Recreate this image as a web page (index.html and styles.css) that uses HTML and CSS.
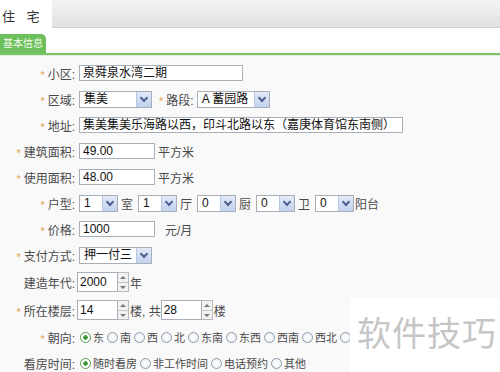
FILE: index.html
```html
<!DOCTYPE html>
<html lang="zh-CN">

<head>
    <meta charset="UTF-8">
    <title>住宅 - 基本信息</title>
    <link rel="stylesheet" href="styles.css">
</head>

<body>
    <div class="topbar">
        <div class="tab-home">住 宅</div>
        <div class="tab-rest"></div>
    </div>
    <div class="section-head">
        <span class="section-tab">基本信息</span>
    </div>

    <div class="form">
        <div class="row">
            <label class="lbl"><i class="req">*</i>小区:</label>
            <span class="txt w-name">泉舜泉水湾二期</span>
        </div>
        <div class="row">
            <label class="lbl"><i class="req">*</i>区域:</label>
            <span class="sel w-sel"><b>集美</b><i class="arrow"></i></span>
            <label class="lbl-inline"><i class="req">*</i>路段:</label>
            <span class="sel w-sel"><b>A 蓄园路</b><i class="arrow"></i></span>
        </div>
        <div class="row">
            <label class="lbl"><i class="req">*</i>地址:</label>
            <span class="txt w-addr">集美集美乐海路以西，印斗北路以东（嘉庚体育馆东南侧）</span>
        </div>
        <div class="row">
            <label class="lbl"><i class="req">*</i>建筑面积:</label>
            <span class="txt w-num">49.00</span>
            <span class="unit">平方米</span>
        </div>
        <div class="row">
            <label class="lbl"><i class="req">*</i>使用面积:</label>
            <span class="txt w-num">48.00</span>
            <span class="unit">平方米</span>
        </div>
        <div class="row">
            <label class="lbl"><i class="req">*</i>户型:</label>
            <span class="sel w-small"><b>1</b><i class="arrow"></i></span>
            <span class="unit u-room">室</span>
            <span class="sel w-small"><b>1</b><i class="arrow"></i></span>
            <span class="unit u-room">厅</span>
            <span class="sel w-small"><b>0</b><i class="arrow"></i></span>
            <span class="unit u-room">厨</span>
            <span class="sel w-small"><b>0</b><i class="arrow"></i></span>
            <span class="unit u-room">卫</span>
            <span class="sel w-small"><b>0</b><i class="arrow"></i></span>
            <span class="unit u-tight">阳台</span>
        </div>
        <div class="row">
            <label class="lbl"><i class="req">*</i>价格:</label>
            <span class="txt w-num">1000</span>
            <span class="unit u-wide">元/月</span>
        </div>
        <div class="row">
            <label class="lbl"><i class="req">*</i>支付方式:</label>
            <span class="sel w-sel"><b>押一付三</b><i class="arrow"></i></span>
        </div>
        <div class="row row-tall">
            <label class="lbl lbl-plain">建造年代:</label>
            <span class="spin"><b>2000</b><i class="spin-btn"><em class="up"></em><em class="down"></em></i></span>
            <span class="unit u-tight">年</span>
        </div>
        <div class="row row-tall">
            <label class="lbl lbl-plain"><i class="req">*</i>所在楼层:</label>
            <span class="spin"><b>14</b><i class="spin-btn"><em class="up"></em><em class="down"></em></i></span>
            <span class="unit u-tight">楼, 共</span>
            <span class="spin"><b>28</b><i class="spin-btn"><em class="up"></em><em class="down"></em></i></span>
            <span class="unit u-tight">楼</span>
        </div>
        <div class="row">
            <label class="lbl"><i class="req">*</i>朝向:</label>
            <div class="radios">
                <span class="radio on">东</span>
                <span class="radio">南</span>
                <span class="radio">西</span>
                <span class="radio">北</span>
                <span class="radio">东南</span>
                <span class="radio">东西</span>
                <span class="radio">西南</span>
                <span class="radio">西北</span>
                <span class="radio"></span>
            </div>
        </div>
        <div class="row">
            <label class="lbl">看房时间:</label>
            <div class="radios">
                <span class="radio on">随时看房</span>
                <span class="radio">非工作时间</span>
                <span class="radio">电话预约</span>
                <span class="radio">其他</span>
            </div>
        </div>
    </div>

    <div class="watermark">软件技巧</div>
</body>

</html>
```

FILE: styles.css
```css
* {
    padding: 0;
    margin: 0;
    box-sizing: border-box;
}

body {
    width: 500px;
    height: 372px;
    overflow: hidden;
    position: relative;
    background-color: #f9f9f9;
    font-family: "Liberation Sans", "Noto Sans CJK SC", sans-serif;
    font-size: 12px;
    color: #4a4a4a;
}

i,
b,
em {
    font-style: normal;
    font-weight: normal;
}

/* 顶部标签栏 */
.topbar {
    display: flex;
    height: 28px;
}

.tab-home {
    width: 52px;
    background-color: #fff;
    font-size: 13px;
    color: #333;
    padding: 6px 0 0 2px;
    word-spacing: 8px;
}

.tab-rest {
    flex: 1;
    background: linear-gradient(#f3f3f3, #e1e1e1);
    border-bottom: 1px solid #d2d2d2;
}

/* 基本信息 */
.section-head {
    height: 27px;
    padding-top: 6px;
    background-color: #fff;
    border-bottom: 2px solid #79c46a;
    box-shadow: 0 1px 0 #e1f1dc;
}

.section-tab {
    display: block;
    width: 46px;
    height: 19px;
    line-height: 19px;
    background-color: #6dc05c;
    border-radius: 0 5px 0 0;
    color: #f4fbf2;
    font-size: 10px;
    text-align: center;
}

.form {
    padding-top: 5px;
}

.row {
    display: flex;
    align-items: center;
    height: 26px;
}

.row-tall {
    height: 28px;
}

.lbl {
    width: 79px;
    padding-right: 4px;
    text-align: right;
    flex-shrink: 0;
}

.lbl-plain {
    width: 77px;
    padding-right: 2px;
}

.lbl-inline {
    margin: 0 3px 0 7px;
}

.req {
    color: #e6a24a;
    font-size: 11px;
    margin-right: 3px;
}

.unit {
    margin-left: 3px;
}

.u-room {
    margin: 0 5px 0 3px;
}

.u-wide {
    margin-left: 10px;
}

.u-tight {
    margin-left: 1px;
}

/* 文本框 */
.txt {
    display: block;
    height: 16px;
    line-height: 14px;
    border: 1px solid #a7b0ba;
    background-color: #fff;
    padding: 0 3px;
    color: #111;
    white-space: nowrap;
    overflow: hidden;
}

.w-name {
    width: 164px;
}

.w-addr {
    width: 324px;
}

.w-num {
    width: 76px;
}

/* 下拉框 */
.sel {
    display: flex;
    height: 17px;
    border: 1px solid #a7b0ba;
    background-color: #fff;
    color: #111;
}

.sel b {
    flex: 1;
    padding-left: 4px;
    line-height: 15px;
    white-space: nowrap;
}

.w-sel {
    width: 73px;
}

.w-small {
    width: 39px;
}

.arrow {
    width: 15px;
    background: linear-gradient(#e2eaf8, #c2d1ec);
    border-left: 1px solid #b8c7e0;
    position: relative;
}

.arrow::after {
    content: "";
    position: absolute;
    left: 4px;
    top: 3px;
    width: 4px;
    height: 4px;
    border-right: 2px solid #4d6291;
    border-bottom: 2px solid #4d6291;
    transform: rotate(45deg);
}

/* 数字微调框 */
.spin {
    display: flex;
    height: 20px;
}

.spin b {
    width: 41px;
    border: 1px solid #a7b0ba;
    background-color: #fff;
    color: #111;
    padding-left: 2px;
    line-height: 18px;
}

.spin-btn {
    display: flex;
    flex-direction: column;
    width: 11px;
    border: 1px solid #b9b9b9;
    border-left: none;
    background-color: #f1f1f1;
}

.spin-btn em {
    flex: 1;
    position: relative;
}

.spin-btn .up {
    border-bottom: 1px solid #c8c8c8;
}

.spin-btn em::after {
    content: "";
    position: absolute;
    left: 2px;
    width: 0;
    height: 0;
    border-left: 3px solid transparent;
    border-right: 3px solid transparent;
}

.spin-btn .up::after {
    top: 3px;
    border-bottom: 3px solid #777;
}

.spin-btn .down::after {
    top: 3px;
    border-top: 3px solid #777;
}

/* 单选 */
.radios {
    display: flex;
    gap: 3px;
    padding-left: 1px;
    white-space: nowrap;
    font-size: 11px;
}

.radio {
    display: flex;
    align-items: center;
}

.radio::before {
    content: "";
    width: 11px;
    height: 11px;
    border: 1px solid #8e9aa8;
    border-radius: 50%;
    background: radial-gradient(#fff, #e6ebf0);
    margin-right: 2px;
    box-sizing: border-box;
}

.radio.on::before {
    border-color: #5a9a4e;
    background: radial-gradient(#3f9a3c 0, #3f9a3c 2px, #fff 2.5px);
}

/* 水印 */
.watermark {
    position: absolute;
    left: 350px;
    top: 298px;
    width: 150px;
    height: 74px;
    background-color: #fff;
    padding: 14px 0 0 7px;
    font-family: "Noto Sans CJK SC", sans-serif;
    font-size: 34px;
    line-height: 40px;
    color: #c6c6c6;
    letter-spacing: 1px;
}
```
